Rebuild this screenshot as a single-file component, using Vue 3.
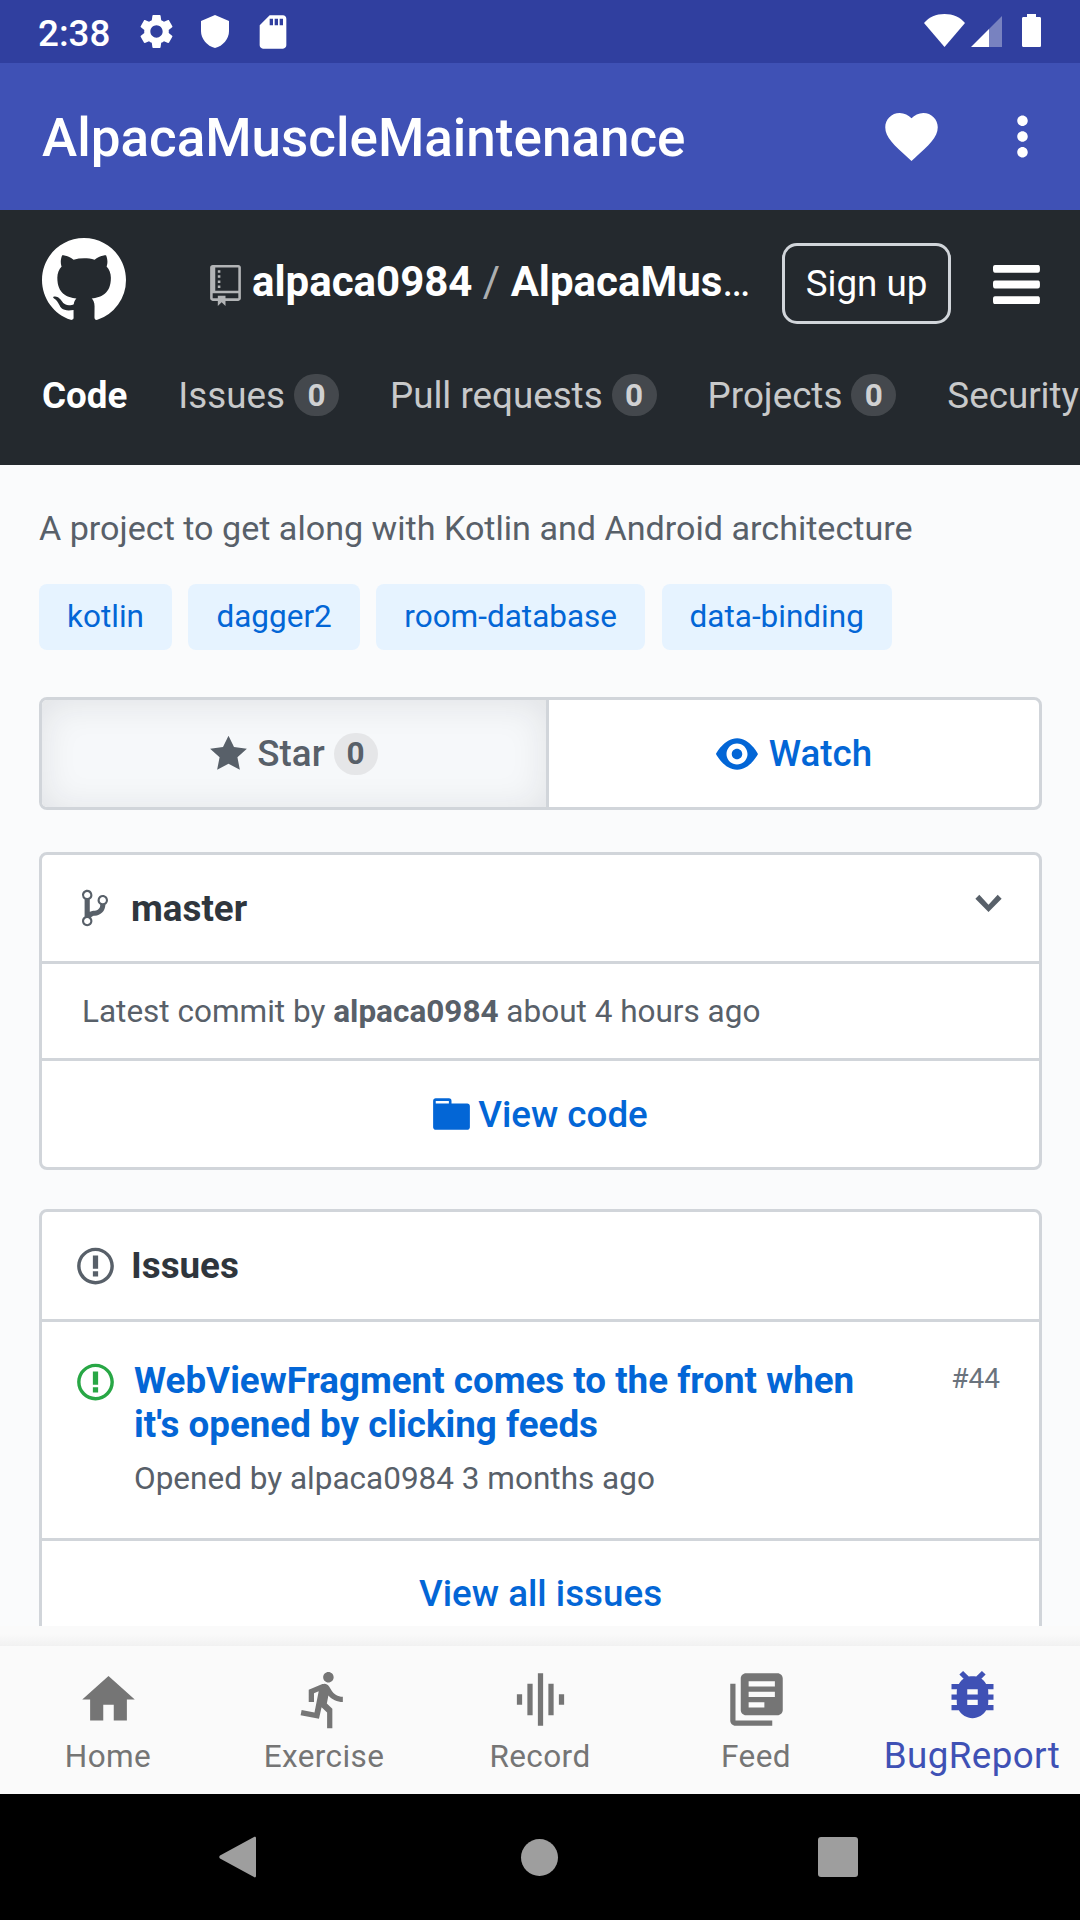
<template>
  <div class="screen">
    <div class="status-bar">
      <span class="time">2:38</span>
      <svg class="st-gear" viewBox="0 0 24 24"><path :d="icons.settings" /></svg>
      <svg class="st-shield" viewBox="0 0 28 33"><path d="M14 0 28 6v10c0 8-6 15-14 17C6 31 0 24 0 16V6z" /></svg>
      <svg class="st-sd" viewBox="0 0 24 24"><path :d="icons.sd" /></svg>
      <span class="spacer"></span>
      <svg class="st-wifi" viewBox="0 0 41 33"><path d="M0 9C5 3 12 0 20.500 0S36 3 41 9L20.500 33z" /></svg>
      <svg class="st-signal" viewBox="0 0 31 31">
        <path d="M18 13 31 0v31H18z" opacity="0.35" />
        <path d="M0 31 18 13v18z" />
      </svg>
      <svg class="st-battery" viewBox="0 0 19 33"><path d="M5 0h9v3h3.500c1 0 1.500.6 1.500 1.500V31.500c0 1-.6 1.500-1.500 1.500h-16C.6 33 0 32.400 0 31.500V4.500C0 3.600.6 3 1.500 3H5z" /></svg>
    </div>

    <div class="app-bar">
      <span class="app-title">AlpacaMuscleMaintenance</span>
      <svg class="app-icon heart" viewBox="0 0 24 24"><path :d="icons.heart" /></svg>
      <svg class="app-icon" viewBox="0 0 24 24"><path :d="icons.more" /></svg>
    </div>

    <div class="webview">
      <header class="gh-header">
        <div class="gh-top">
          <svg class="gh-logo" viewBox="0 0 16 16"><path :d="icons.github" /></svg>
          <svg class="repo-icon" viewBox="0 0 12 16"><path :d="icons.repo" /></svg>
          <div class="repo-name">
            <b>alpaca0984</b><span class="slash"> / </span><b>AlpacaMuscleMaintenance</b>
          </div>
          <div class="signup">Sign up</div>
          <svg class="burger" viewBox="0 0 12 16"><path :d="icons.bars" /></svg>
        </div>
        <nav class="gh-tabs">
          <span class="tab current">Code</span>
          <span v-for="tab in tabs" :key="tab" class="tab">
            {{ tab }}<em class="count">0</em>
          </span>
          <span class="tab">Security</span>
        </nav>
      </header>

      <main class="content">
        <p class="desc">A project to get along with Kotlin and Android architecture</p>
        <div class="topics">
          <span v-for="topic in topics" :key="topic" class="topic">{{ topic }}</span>
        </div>

        <div class="btn-group">
          <div class="btn star">
            <svg class="star-icon" viewBox="0 0 14 16"><path :d="icons.star" /></svg>
            Star<em class="star-count">0</em>
          </div>
          <div class="btn watch">
            <svg class="eye-icon" viewBox="0 0 16 16"><path :d="icons.eye" /></svg>
            Watch
          </div>
        </div>

        <section class="card code-card">
          <div class="branch">
            <svg class="branch-icon" viewBox="0 0 10 16"><path :d="icons.branch" /></svg>
            <strong>master</strong>
            <svg class="chevron" viewBox="0 0 10 16"><path :d="icons.chevron" /></svg>
          </div>
          <div class="commit">Latest commit by <b>alpaca0984</b> about 4 hours ago</div>
          <div class="view-link view-code">
            <svg class="folder" viewBox="0 0 14 16"><path :d="icons.folder" /></svg>
            View code
          </div>
        </section>

        <section class="card issues-card">
          <div class="issues-head">
            <svg class="issue-icon" viewBox="0 0 14 16"><path :d="icons.issue" /></svg>
            <strong>Issues</strong>
          </div>
          <div class="issue">
            <svg class="issue-icon open" viewBox="0 0 14 16"><path :d="icons.issue" /></svg>
            <div class="issue-body">
              <div class="issue-title">WebViewFragment comes to the front when it's opened by clicking feeds</div>
              <div class="issue-meta">Opened by alpaca0984 3 months ago</div>
            </div>
            <span class="issue-no">#44</span>
          </div>
          <div class="view-link view-all">View all issues</div>
        </section>
      </main>
    </div>

    <div class="nav-shadow"></div>
    <div class="bottom-nav">
      <div v-for="item in nav" :key="item.label" class="nav-item" :class="{ active: item.active }">
        <svg viewBox="0 0 24 24"><path :d="item.icon" /></svg>
        <span>{{ item.label }}</span>
      </div>
    </div>

    <div class="system-bar">
      <svg class="sys-back" viewBox="0 0 38 42"><path d="M37 2v38c0 1-1 2-2 1L1 22.500c-1-.8-1-2 0-3L35 1c1-.6 2 0 2 1z" /></svg>
      <span class="sys-home"></span>
      <span class="sys-recent"></span>
    </div>
  </div>
</template>

<script setup>
const icons = {
  settings:
    "M19.14 12.94c.04-.3.06-.61.06-.94 0-.32-.02-.64-.07-.94l2.03-1.58c.18-.14.23-.41.12-.61l-1.92-3.32c-.12-.22-.37-.29-.59-.22l-2.39.96c-.5-.38-1.03-.7-1.62-.94l-.36-2.54c-.04-.24-.24-.41-.48-.41h-3.84c-.24 0-.43.17-.47.41l-.36 2.54c-.59.24-1.13.57-1.62.94l-2.39-.96c-.22-.08-.47 0-.59.22L2.74 8.87c-.12.21-.08.47.12.61l2.03 1.58c-.05.3-.09.63-.09.94s.02.64.07.94l-2.03 1.58c-.18.14-.23.41-.12.61l1.92 3.32c.12.22.37.29.59.22l2.39-.96c.5.38 1.03.7 1.62.94l.36 2.54c.05.24.24.41.48.41h3.84c.24 0 .44-.17.47-.41l.36-2.54c.59-.24 1.13-.56 1.62-.94l2.39.96c.22.08.47 0 .59-.22l1.92-3.32c.12-.22.07-.47-.12-.61l-2.01-1.58zM12 15.6c-1.98 0-3.6-1.62-3.6-3.6s1.62-3.6 3.6-3.6 3.6 1.62 3.6 3.6-1.62 3.6-3.6 3.6z",
  sd: "M18 2h-8L4.020 8 4 20c0 1.100.9 2 2 2h12c1.100 0 2-.9 2-2V4c0-1.100-.9-2-2-2zm-6 6h-2V4h2v4zm3 0h-2V4h2v4zm3 0h-2V4h2v4z",
  heart:
    "M12 21.350l-1.450-1.320C5.400 15.360 2 12.280 2 8.500 2 5.420 4.420 3 7.500 3c1.740 0 3.410.81 4.500 2.090C13.090 3.810 14.760 3 16.500 3 19.580 3 22 5.420 22 8.500c0 3.780-3.400 6.860-8.550 11.540L12 21.350z",
  more: "M12 8c1.100 0 2-.9 2-2s-.9-2-2-2-2 .9-2 2 .9 2 2 2zm0 2c-1.100 0-2 .9-2 2s.9 2 2 2 2-.9 2-2-.9-2-2-2zm0 6c-1.100 0-2 .9-2 2s.9 2 2 2 2-.9 2-2-.9-2-2-2z",
  github:
    "M8 0C3.580 0 0 3.580 0 8c0 3.540 2.290 6.530 5.470 7.590.4.07.55-.17.55-.38 0-.19-.01-.82-.01-1.490-2.010.37-2.530-.49-2.690-.94-.09-.23-.48-.94-.82-1.130-.28-.15-.68-.52-.01-.53.63-.01 1.080.58 1.230.82.72 1.210 1.870.87 2.330.66.07-.52.28-.87.51-1.070-1.780-.2-3.640-.89-3.640-3.950 0-.87.31-1.590.82-2.150-.08-.2-.36-1.020.08-2.120 0 0 .67-.21 2.200.82.64-.18 1.320-.27 2-.27.68 0 1.360.09 2 .27 1.530-1.040 2.200-.82 2.200-.82.44 1.100.16 1.920.08 2.120.51.56.82 1.270.82 2.150 0 3.070-1.870 3.750-3.650 3.950.29.25.54.73.54 1.480 0 1.070-.01 1.930-.01 2.200 0 .21.15.46.55.38A8.013 8.013 0 0016 8c0-4.420-3.580-8-8-8z",
  repo: "M4 9H3V8h1v1zm0-3H3v1h1V6zm0-2H3v1h1V4zm0-2H3v1h1V2zm8-1v12c0 .55-.45 1-1 1H6v2l-1.500-1.500L3 16v-2H1c-.55 0-1-.45-1-1V1c0-.55.45-1 1-1h10c.55 0 1 .45 1 1zm-1 10H1v2h2v-1h3v1h5v-2zm0-10H2v9h9V1z",
  bars: "M11.410 9H.59C0 9 0 8.590 0 8c0-.59 0-1 .59-1H11.400c.59 0 .59.41.59 1 0 .59 0 1-.59 1h.01zm0-4H.59C0 5 0 4.590 0 4c0-.59 0-1 .59-1H11.400c.59 0 .59.41.59 1 0 .59 0 1-.59 1h.01zM.59 11H11.400c.59 0 .59.41.59 1 0 .59 0 1-.59 1H.59C0 13 0 12.590 0 12c0-.59 0-1 .59-1z",
  star: "M14 6l-4.900-.64L7 1 4.900 5.360 0 6l3.600 3.260L2.670 14 7 11.670 11.330 14l-.93-4.740L14 6z",
  eye: "M8.060 2C3 2 0 8 0 8s3 6 8.060 6C13 14 16 8 16 8s-3-6-7.940-6zM8 12c-2.200 0-4-1.780-4-4 0-2.200 1.800-4 4-4 2.220 0 4 1.800 4 4 0 2.220-1.780 4-4 4zm2-4c0 1.110-.89 2-2 2-1.110 0-2-.89-2-2 0-1.110.89-2 2-2 1.110 0 2 .89 2 2z",
  branch:
    "M10 5c0-1.110-.89-2-2-2a1.993 1.993 0 00-1 3.720v.3c-.02.52-.23.98-.63 1.380-.4.4-.86.61-1.380.63-.83.02-1.480.16-2 .45V4.720a1.993 1.993 0 00-1-3.720C.88 1 0 1.890 0 3a2 2 0 001 1.720v6.560c-.59.35-1 .99-1 1.720 0 1.110.89 2 2 2 1.110 0 2-.89 2-2 0-.53-.2-1-.53-1.360.09-.06.48-.41.59-.47.25-.11.56-.17.94-.17 1.050-.05 1.950-.45 2.750-1.250S8.950 7.770 9 6.730h-.02C9.590 6.370 10 5.730 10 5zM2 1.800c.66 0 1.200.55 1.200 1.200 0 .65-.55 1.200-1.200 1.200C1.350 4.200.8 3.650.8 3c0-.65.55-1.200 1.200-1.200zm0 12.410c-.66 0-1.200-.55-1.200-1.200 0-.65.55-1.200 1.200-1.200.65 0 1.200.55 1.200 1.200 0 .65-.55 1.200-1.200 1.200zm6-8c-.66 0-1.200-.55-1.200-1.200 0-.65.55-1.200 1.200-1.200.65 0 1.200.55 1.200 1.200 0 .65-.55 1.200-1.200 1.200z",
  chevron: "M5 11L0 6l1.500-1.500L5 8.250 8.500 4.500 10 6l-5 5z",
  folder: "M13 4H7V3c0-.66-.31-1-1-1H1c-.55 0-1 .45-1 1v10c0 .55.45 1 1 1h12c.55 0 1-.45 1-1V5c0-.55-.45-1-1-1zM6 4H1V3h5v1z",
  issue:
    "M7 2.300c3.140 0 5.700 2.560 5.700 5.700s-2.560 5.700-5.700 5.700A5.710 5.710 0 011.300 8c0-3.140 2.560-5.700 5.700-5.700zM7 1C3.140 1 0 4.140 0 8s3.140 7 7 7 7-3.140 7-7-3.140-7-7-7zm1 3H6v5h2V4zm0 6H6v2h2v-2z",
};

const tabs = ["Issues", "Pull requests", "Projects"];
const topics = ["kotlin", "dagger2", "room-database", "data-binding"];

const nav = [
  { label: "Home", icon: "M10 20v-6h4v6h5v-8h3L12 3 2 12h3v8z" },
  {
    label: "Exercise",
    icon: "M13.490 5.480c1.100 0 2-.9 2-2s-.9-2-2-2-2 .9-2 2 .9 2 2 2zm-3.600 13.900l1-4.400 2.100 2v6h2v-7.500l-2.100-2 .6-3c1.300 1.500 3.300 2.500 5.500 2.500v-2c-1.900 0-3.500-1-4.300-2.400l-1-1.600c-.4-.6-1-1-1.700-1-.3 0-.5.1-.8.1l-5.200 2.200v4.700h2v-3.400l1.800-.7-1.600 8.100-4.900-1-.4 2 7 1.400z",
  },
  { label: "Record", icon: "M7 18h2V6H7v12zm4 4h2V2h-2v20zm-8-8h2v-4H3v4zm12 4h2V6h-2v12zm4-8v4h2v-4h-2z" },
  {
    label: "Feed",
    icon: "M4 6H2v14c0 1.100.9 2 2 2h14v-2H4V6zm16-4H8c-1.100 0-2 .9-2 2v12c0 1.100.9 2 2 2h12c1.100 0 2-.9 2-2V4c0-1.100-.9-2-2-2zm-1 9H9V9h10v2zm-4 4H9v-2h6v2zm4-8H9V5h10v2z",
  },
  {
    label: "BugReport",
    active: true,
    icon: "M20 8h-2.810c-.45-.78-1.070-1.450-1.820-1.960L17 4.410 15.590 3l-2.170 2.170C12.960 5.060 12.490 5 12 5c-.49 0-.96.06-1.410.17L8.410 3 7 4.410l1.620 1.630C7.880 6.550 7.260 7.220 6.810 8H4v2h2.090c-.05.33-.09.66-.09 1v1H4v2h2v1c0 .34.04.67.09 1H4v2h2.810c1.040 1.790 2.970 3 5.190 3s4.150-1.210 5.190-3H20v-2h-2.090c.05-.33.09-.66.09-1v-1h2v-2h-2v-1c0-.34-.04-.67-.09-1H20V8zm-6 8h-4v-2h4v2zm0-4h-4v-2h4v2z",
  },
];
</script>

<style scoped>
.screen {
  width: 1080px;
  height: 1920px;
  display: flex;
  flex-direction: column;
  overflow: hidden;
  font-family: Roboto, sans-serif;
  background: #fafbfc;
}

svg {
  display: block;
  flex: none;
  fill: currentColor;
}

/* android chrome */
.status-bar {
  height: 63px;
  flex: none;
  display: flex;
  align-items: center;
  padding: 0 39px 0 38px;
  background: #303f9f;
  color: #fff;
}

.time {
  font-size: 36.750px;
  font-weight: 500;
  width: 98px;
  margin-top: 4px;
}

.spacer {
  flex: 1;
}

.st-gear {
  width: 41px;
  height: 41px;
}

.st-sd {
  width: 40px;
  height: 40px;
  margin-left: 24px;
}

.st-shield {
  width: 28px;
  height: 33px;
  margin-left: 24px;
}

.st-wifi {
  width: 41px;
  height: 33px;
  margin-top: -3px;
}

.st-signal {
  width: 31px;
  height: 31px;
  margin-left: 6px;
}

.st-battery {
  width: 19px;
  height: 33px;
  margin-left: 20px;
  margin-top: -2px;
}

.app-bar {
  height: 147px;
  flex: none;
  display: flex;
  align-items: center;
  padding: 0 26px 0 42px;
  background: #3f51b5;
  color: #fff;
  box-sizing: border-box;
}

.app-title {
  flex: 1;
  font-size: 53px;
  font-weight: 500;
  margin-top: 3px;
}

.app-icon {
  width: 63px;
  height: 63px;
}

.heart {
  margin-right: 48px;
}

/* github page */
.webview {
  height: 1416px;
  flex: none;
  overflow: hidden;
}

.gh-header {
  height: 255px;
  box-sizing: border-box;
  padding: 28px 0 0 42px;
  background: #24292e;
  color: #fff;
}

.gh-top {
  height: 84px;
  display: flex;
  align-items: center;
  padding-right: 40px;
}

.gh-logo {
  width: 84px;
  height: 84px;
}

.repo-icon {
  width: 31px;
  height: 41px;
  margin: 10px 11px 0 84px;
  color: rgba(255, 255, 255, 0.65);
}

.repo-name {
  flex: 1;
  min-width: 0;
  margin: 0 28px 0 0;
  padding-top: 2px;
  font-size: 42px;
  white-space: nowrap;
  overflow: hidden;
  text-overflow: ellipsis;
}

.repo-name b {
  font-weight: 700;
}

.slash {
  color: rgba(255, 255, 255, 0.65);
}

.signup {
  width: 169px;
  height: 81px;
  box-sizing: border-box;
  border: 3px solid #d1d5da;
  border-radius: 15px;
  display: flex;
  align-items: center;
  justify-content: center;
  font-size: 36.750px;
  margin-top: 6px;
}

.burger {
  width: 47px;
  height: 63px;
  margin: 9px 0 0 42px;
}

.gh-tabs {
  display: flex;
  gap: 51px;
  margin-top: 43px;
  height: 60px;
  align-items: center;
  font-size: 36.750px;
  white-space: nowrap;
  overflow: hidden;
  color: rgba(255, 255, 255, 0.75);
}

.tab {
  display: flex;
  align-items: center;
}

.current {
  color: #fff;
  font-weight: 700;
}

.count {
  width: 45px;
  height: 42px;
  border-radius: 21px;
  margin-left: 9px;
  background: rgba(255, 255, 255, 0.15);
  display: flex;
  align-items: center;
  justify-content: center;
  font-style: normal;
  font-weight: 700;
  font-size: 31.500px;
}

.content {
  padding: 0 38px 0 39px;
  color: #586069;
}

.desc {
  margin: 0;
  padding-top: 42px;
  height: 77px;
  font-size: 34.125px;
  line-height: 43px;
}

.topics {
  display: flex;
  gap: 16.500px;
}

.topic {
  height: 66px;
  box-sizing: border-box;
  padding: 0 28px 2px;
  display: flex;
  align-items: center;
  border-radius: 8px;
  background: #e6f3ff;
  color: #0366d6;
  font-size: 31.500px;
}

.btn-group {
  display: flex;
  height: 113px;
  box-sizing: border-box;
  margin-top: 47px;
  border: 3px solid #d1d5da;
  border-radius: 8px;
  background: #fff;
  overflow: hidden;
}

.btn {
  flex: 1;
  display: flex;
  align-items: center;
  justify-content: center;
  font-size: 36.750px;
  font-weight: 500;
}

.star {
  flex: none;
  width: 507px;
  box-sizing: border-box;
  border-right: 3px solid #d1d5da;
  background: #f6f8fa;
  box-shadow: inset 0 3px 36px rgba(27, 31, 35, 0.1);
  color: #586069;
}

.star-icon {
  width: 37px;
  height: 42px;
  margin-right: 10px;
}

.star-count {
  width: 44px;
  height: 42px;
  margin-left: 9px;
  border-radius: 21px;
  background: #e5e6e8;
  display: flex;
  align-items: center;
  justify-content: center;
  font-style: normal;
  font-weight: 700;
  font-size: 31.500px;
}

.watch {
  color: #0366d6;
}

.eye-icon {
  width: 42px;
  height: 42px;
  margin-right: 11px;
}

.card {
  margin-top: 42px;
  border: 3px solid #d1d5da;
  border-radius: 8px;
  background: #fff;
}

.issues-card {
  margin-top: 39px;
}

.card strong {
  color: #2f363d;
  font-weight: 700;
  font-size: 36.750px;
}

.branch {
  height: 106px;
  display: flex;
  align-items: center;
  padding: 0 37px 0 40px;
  border-bottom: 3px solid #d1d5da;
}

.branch-icon {
  width: 26px;
  height: 42px;
  margin-right: 23px;
}

.branch strong {
  flex: 1;
}

.chevron {
  width: 27px;
  height: 42px;
  color: #586069;
  margin-top: -9px;
}

.commit {
  height: 94px;
  display: flex;
  align-items: center;
  padding-left: 40px;
  white-space: pre;
  font-size: 31.500px;
  border-bottom: 3px solid #d1d5da;
}

.commit b {
  font-weight: 700;
}

.view-link {
  display: flex;
  align-items: center;
  justify-content: center;
  color: #0366d6;
  font-size: 36.750px;
  font-weight: 500;
}

.view-code {
  height: 106px;
}

.folder {
  width: 37px;
  height: 42px;
  margin-right: 8px;
}

.issues-head {
  height: 107px;
  display: flex;
  align-items: center;
  padding-left: 35px;
  border-bottom: 3px solid #d1d5da;
}

.issue-icon {
  width: 37px;
  height: 42px;
  margin-right: 17px;
}

.issue {
  height: 219px;
  box-sizing: border-box;
  display: flex;
  padding: 37px 39px 0 35px;
  border-bottom: 3px solid #d1d5da;
}

.open {
  color: #28a745;
  margin: 2px 20px 0 0;
}

.issue-body {
  flex: 1;
}

.issue-title {
  width: 740px;
  color: #0366d6;
  font-size: 36.750px;
  font-weight: 700;
  line-height: 44px;
}

.issue-meta {
  margin-top: 12px;
  font-size: 31.500px;
  line-height: 40px;
}

.issue-no {
  font-size: 28px;
  color: #6a737d;
  line-height: 40px;
}

.view-all {
  height: 104px;
}

/* bottom navigation */
.nav-shadow {
  height: 20px;
  flex: none;
  background: linear-gradient(#fafafa 40%, #f1f1f1);
}

.bottom-nav {
  height: 148px;
  flex: none;
  display: flex;
  background: #fafafa;
  color: #757575;
}

.nav-item {
  flex: 1;
  display: flex;
  flex-direction: column;
  align-items: center;
  padding-top: 22px;
  font-size: 31.500px;
  letter-spacing: 0.4px;
}

.nav-item svg {
  width: 63px;
  height: 63px;
}

.nav-item span {
  margin-top: 6px;
  white-space: nowrap;
  line-height: 40px;
}

.nav-item.active {
  color: #3f51b5;
  font-size: 36.750px;
}

.nav-item.active svg {
  margin-top: -5px;
}

.nav-item.active span {
  margin-top: 10px;
}

.system-bar {
  flex: 1;
  background: #000;
  display: flex;
  align-items: center;
  color: #9e9e9e;
}

.sys-back {
  width: 38px;
  height: 42px;
  margin-left: 219px;
}

.sys-home {
  width: 37px;
  height: 37px;
  margin-left: 264px;
  border-radius: 50%;
  background: #9e9e9e;
}

.sys-recent {
  width: 40px;
  height: 40px;
  margin-left: 260px;
  border-radius: 3px;
  background: #9e9e9e;
}
</style>

<style>
body {
  margin: 0;
}
</style>
